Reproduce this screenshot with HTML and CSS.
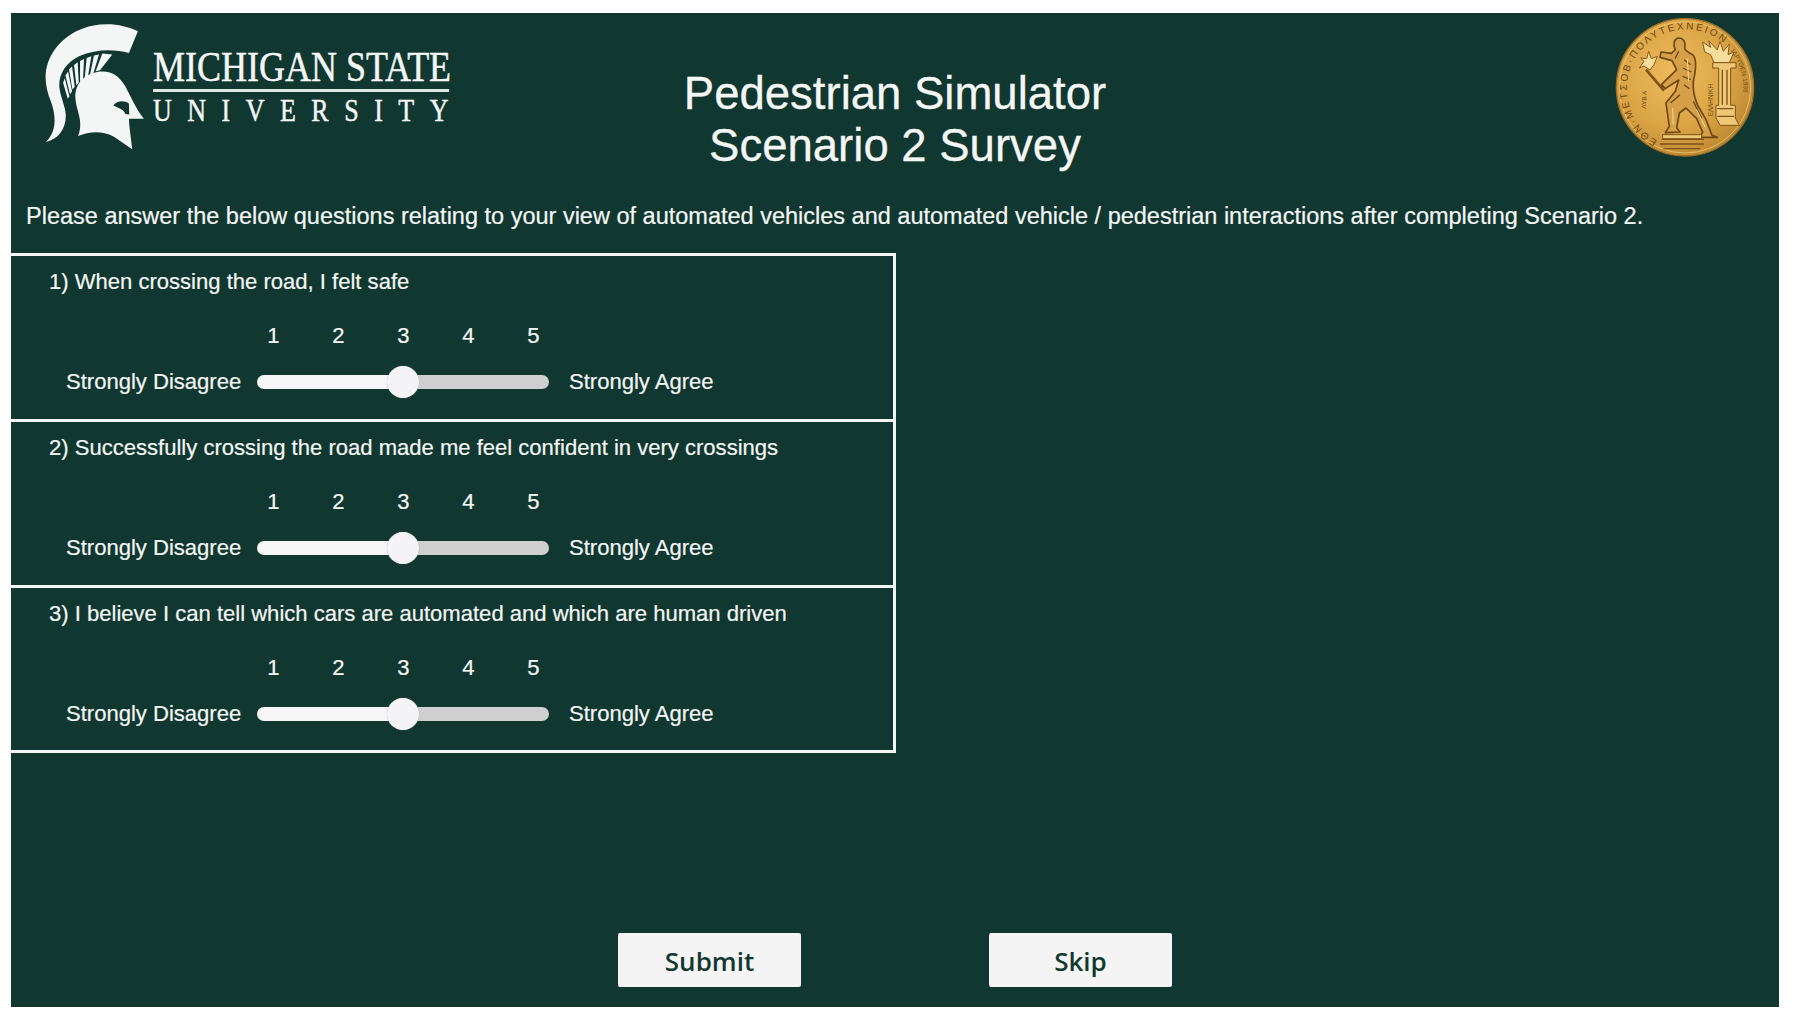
FILE: index.html
```html
<!DOCTYPE html>
<html>
<head>
    <title>Pedestrian Simulator - Scenario 2 Survey</title>
    <link rel="stylesheet" href="styles.css">
</head>
<body>
    <div class="panel">
        <div class="header">
            <div class="logo">
                <svg class="helmet" viewBox="130 70 300 385">
                    <!-- crest -->
                    <path fill="#f4f6f5" d="M412 95C375 76 325 68 275 78C215 90 165 130 143 185C128 225 134 265 150 305C165 345 170 395 135 428C175 420 197 385 195 345C193 320 180 295 176 265C172 225 195 190 235 170C285 148 340 148 385 160Z"/>
                    <!-- plume ribs -->
                    <path fill="#f4f6f5" d="M305 162L335 165L298 212L285 215ZM280 168L295 165L278 222L268 226ZM258 175L272 170L262 230L252 236ZM238 184L250 178L247 240L238 247ZM220 196L231 188L234 250L227 257ZM205 210L214 201L222 262L215 270ZM194 228L202 216L214 275L208 284ZM187 250L192 236L206 290L201 298Z"/>
                    <!-- helmet -->
                    <path fill="#f4f6f5" fill-rule="evenodd" d="M300 216C255 220 222 250 224 295C226 335 250 365 232 410C265 398 300 392 340 412L395 450C392 420 386 385 385 358L430 358C410 335 395 300 375 262C358 232 335 214 300 216ZM338 318C350 302 372 302 385 312L386 345L374 344C372 330 352 325 338 318Z"/>
                </svg>
                <div class="wordmark">
                    <div class="wordmark-top">MICHIGAN STATE</div>
                    <div class="wordmark-line"></div>
                    <div class="wordmark-bottom">UNIVERSITY</div>
                </div>
            </div>
            <h1 class="title">Pedestrian Simulator<br>Scenario 2 Survey</h1>
            <svg class="coin" viewBox="105 50 420 420">
                <defs>
                    <radialGradient id="gold" cx="42%" cy="40%" r="65%">
                        <stop offset="0%" stop-color="#edbb5c"/>
                        <stop offset="60%" stop-color="#dba546"/>
                        <stop offset="100%" stop-color="#bb8630"/>
                    </radialGradient>
                    <path id="rim" d="M232 418A178 178 0 1 1 458 152"/>
                    <path id="rimRight" d="M452 150A172 172 0 0 1 472 335"/>
                </defs>
                <circle cx="315" cy="258" r="206" fill="url(#gold)" stroke="#9e6f26" stroke-width="4"/>
                <circle cx="315" cy="258" r="197" fill="none" stroke="#f3cf7e" stroke-width="3" opacity=".7"/>
                <text class="coin-text"><textPath href="#rim" textLength="590">ΕΘΝ·ΜΕΤΣΟΒ·ΠΟΛΥΤΕΧΝΕΙΟΝ</textPath></text>
                <text class="coin-small"><textPath href="#rimRight">ΙΔΡΥΘΕΝ·1836</textPath></text>
                <text class="coin-small" transform="translate(198 322) rotate(-88)">ΛΥΒ Α</text>
                <text class="coin-small" transform="translate(398 345) rotate(-90)">ΕΛΛΗΝΙΚΗ</text>
                <!-- flames -->
                <path fill="#f6dd9c" stroke="#8a5a1c" stroke-width="3" d="M206 150L214 172L232 165L222 190L210 206L192 194L178 200L192 180L182 170L200 172ZM368 122L392 138L386 118L412 146L420 120L430 150L448 128L444 160L462 152L448 184H402L392 160L374 152Z"/>
                <!-- torch -->
                <path fill="none" stroke="#7f5318" stroke-width="8" d="M198 205L252 268"/>
                <!-- column -->
                <path fill="#eec877" stroke="#7f5318" stroke-width="3" d="M398 184H468V200H452V312H466V350L478 372H420L408 350V312H416V200H398Z"/>
                <path fill="none" stroke="#7f5318" stroke-width="4" d="M427 205V310M441 205V310M412 322H460M412 345H462"/>
                <!-- figure -->
                <path fill="#d6a048" stroke="#6e4712" stroke-width="5" stroke-linejoin="round" d="M296 110C310 110 318 122 314 138C312 146 322 152 338 160C350 172 348 205 340 240C338 262 340 280 352 310L378 355L396 402L412 408H360L368 392L350 352L318 320L298 335L290 380L300 392L256 394L268 375L258 305L286 270L296 236L256 262L244 250L290 205L276 178L240 168L243 152L274 156L286 145C278 128 282 112 296 110Z"/>
                <path fill="none" stroke="#6e4712" stroke-width="4" d="M312 175L332 190M308 200L334 212M308 225L332 235M312 250L328 262M300 280L272 305M340 300L365 350M296 150L285 172"/>
                <path fill="none" stroke="#f6d88e" stroke-width="3" d="M322 172L326 240M278 320L280 370M350 325L376 378"/>
                <!-- steps -->
                <path fill="#eec877" stroke="#7f5318" stroke-width="3" d="M248 400H365V412H248Z"/>
                <path fill="none" stroke="#7f5318" stroke-width="4" d="M245 414H372M240 428H372M250 442H360"/>
            </svg>
        </div>

        <p class="intro">Please answer the below questions relating to your view of automated vehicles and automated vehicle / pedestrian interactions after completing Scenario 2.</p>

        <div class="questions">
            <div class="question">
                <div class="question-text">1) When crossing the road, I felt safe</div>
                <div class="scale"><span>1</span><span>2</span><span>3</span><span>4</span><span>5</span></div>
                <div class="slider-row">
                    <span class="low">Strongly Disagree</span>
                    <input class="slider" type="range" min="1" max="5" value="3">
                    <span class="high">Strongly Agree</span>
                </div>
            </div>
            <div class="question">
                <div class="question-text">2) Successfully crossing the road made me feel confident in very crossings</div>
                <div class="scale"><span>1</span><span>2</span><span>3</span><span>4</span><span>5</span></div>
                <div class="slider-row">
                    <span class="low">Strongly Disagree</span>
                    <input class="slider" type="range" min="1" max="5" value="3">
                    <span class="high">Strongly Agree</span>
                </div>
            </div>
            <div class="question">
                <div class="question-text">3) I believe I can tell which cars are automated and which are human driven</div>
                <div class="scale"><span>1</span><span>2</span><span>3</span><span>4</span><span>5</span></div>
                <div class="slider-row">
                    <span class="low">Strongly Disagree</span>
                    <input class="slider" type="range" min="1" max="5" value="3">
                    <span class="high">Strongly Agree</span>
                </div>
            </div>
        </div>

        <div class="buttons">
            <button class="btn">Submit</button>
            <button class="btn">Skip</button>
        </div>
    </div>
</body>
</html>
```

FILE: styles.css
```css
html, body {
    margin: 0;
    height: 100%;
    background: #fff;
    overflow: hidden;
}

body {
    padding: 13px 19px 15px 11px;
    box-sizing: border-box;
    font-family: "Liberation Sans", Arial, sans-serif;
    color: #f4f6f5;
}

.panel {
    display: flex;
    flex-direction: column;
    height: 100%;
    background: #113830;
}

.header {
    display: grid;
    grid-template-columns: 1fr auto 1fr;
    align-items: start;
}

.logo {
    display: flex;
    align-items: flex-start;
    padding: 10px 0 0 33px;
}

.helmet {
    width: 100px;
    height: 128px;
    flex: none;
}

.wordmark {
    margin: 28px 0 0 9px;
    width: 296px;
    font-family: "Liberation Serif", "Times New Roman", serif;
    -webkit-text-stroke: 0.4px #f4f6f5;
}

.wordmark-top {
    font-size: 36px;
    line-height: 32px;
    white-space: nowrap;
    transform: scaleY(1.2);
}

.wordmark-line {
    height: 3px;
    margin-top: 6px;
    background: #dfe6e3;
}

.wordmark-bottom {
    margin-top: 8px;
    font-size: 26px;
    line-height: 22px;
    letter-spacing: 15.5px;
    white-space: nowrap;
    transform: scaleY(1.2);
}

.title {
    margin: 0 0 -1px;
    padding-top: 55px;
    font-size: 45.5px;
    font-weight: normal;
    line-height: 52px;
    text-align: center;
    -webkit-text-stroke: 0.3px #f4f6f5;
}

.coin {
    justify-self: end;
    width: 140px;
    height: 140px;
    margin: 5px 24px 0 0;
}

.coin-text {
    font-family: "Liberation Sans", sans-serif;
    font-size: 30px;
    fill: #704810;
}

.coin-small {
    font-family: "Liberation Sans", sans-serif;
    font-size: 19px;
    fill: #704810;
}

.intro {
    margin: 30px 0 22px 15px;
    font-size: 23.5px;
    line-height: 30px;
    white-space: nowrap;
    -webkit-text-stroke: 0.2px #f4f6f5;
}

.questions {
    width: 885px;
    box-sizing: border-box;
    border: solid #f4f6f5;
    border-width: 0 3px 3px 0;
}

.question {
    height: 166px;
    box-sizing: border-box;
    border-top: 3px solid #f4f6f5;
    padding: 13px 0 0 38px;
    font-size: 22.05px;
    -webkit-text-stroke: 0.2px #f4f6f5;
}

.question:last-child {
    height: 165px;
}

.question-text {
    line-height: 26px;
}

.scale {
    display: flex;
    margin: 28px 0 0 192px;
    line-height: 26px;
}

.scale span {
    width: 65px;
    text-align: center;
}

.slider-row {
    display: flex;
    align-items: center;
    margin: 17px 0 0 17px;
}

.low {
    width: 191px;
    flex: none;
}

.high {
    margin-left: 20px;
}

.slider {
    -webkit-appearance: none;
    appearance: none;
    width: 292px;
    height: 32px;
    margin: 0;
    background: transparent;
}

.slider::-webkit-slider-runnable-track {
    height: 14px;
    border-radius: 7px;
    background: linear-gradient(to right, #f6f6f6 50%, #cfcfcf 50%);
}

.slider::-webkit-slider-thumb {
    -webkit-appearance: none;
    width: 32px;
    height: 32px;
    margin-top: -9px;
    border-radius: 50%;
    background: #f4f4f6;
    box-shadow: 0 0 1px #9a9a9a;
}

.buttons {
    display: flex;
    justify-content: center;
    gap: 188px;
    margin-top: auto;
    padding-bottom: 20px;
}

.btn {
    width: 183px;
    height: 54px;
    padding: 1px 0 0;
    border: 0;
    border-radius: 2px;
    background: #f5f4f5;
    color: #123930;
    font-family: "Open Sans", "Noto Sans", sans-serif;
    font-size: 26px;
    font-weight: 600;
}
```
